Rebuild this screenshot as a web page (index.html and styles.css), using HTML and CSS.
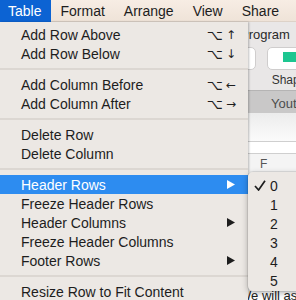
FILE: index.html
```html
<!DOCTYPE html>
<html lang="en">

<head>
  <meta charset="UTF-8" />
  <title>Table menu</title>
  <link rel="stylesheet" href="styles.css">
</head>

<body>
  <div class="menubar">
    <span class="bar-item active">Table</span>
    <span class="bar-item">Format</span>
    <span class="bar-item">Arrange</span>
    <span class="bar-item">View</span>
    <span class="bar-item">Share</span>
  </div>

  <!-- app window behind the menu -->
  <div class="window">
    <div class="title">Program</div>
    <div class="toolbar">
      <div class="tool">
        <div class="btn btn-a"></div>
      </div>
      <div class="tool">
        <div class="btn btn-b"><span class="shape"></span></div>
        <span class="tool-label">Shape</span>
      </div>
    </div>
    <div class="tabbar"><span class="tab">Youth</span></div>
    <div class="sheet">
      <div class="sheet-top"></div>
      <div class="sheet-gap"></div>
      <div class="col-head"><span class="col-f">F</span></div>
      <div class="sheet-body"></div>
      <p class="note">We will ask</p>
    </div>
  </div>

  <!-- Table menu -->
  <div class="menu">
    <div class="item">Add Row Above<span class="keys"><span class="opt">⌥</span><span class="dir">↑</span></span></div>
    <div class="item">Add Row Below<span class="keys"><span class="opt">⌥</span><span class="dir">↓</span></span></div>
    <div class="sep"></div>
    <div class="item">Add Column Before<span class="keys"><span class="opt">⌥</span><span class="dir">←</span></span></div>
    <div class="item">Add Column After<span class="keys"><span class="opt">⌥</span><span class="dir">→</span></span></div>
    <div class="sep"></div>
    <div class="item">Delete Row</div>
    <div class="item">Delete Column</div>
    <div class="sep"></div>
    <div class="item current">Header Rows<svg class="arrow" width="8" height="9" viewBox="0 0 8 9"><polygon points="0,0 8,4.5 0,9" /></svg></div>
    <div class="item">Freeze Header Rows</div>
    <div class="item">Header Columns<svg class="arrow" width="8" height="9" viewBox="0 0 8 9"><polygon points="0,0 8,4.5 0,9" /></svg></div>
    <div class="item">Freeze Header Columns</div>
    <div class="item">Footer Rows<svg class="arrow" width="8" height="9" viewBox="0 0 8 9"><polygon points="0,0 8,4.5 0,9" /></svg></div>
    <div class="sep"></div>
    <div class="item">Resize Row to Fit Content</div>
  </div>

  <!-- Header Rows submenu -->
  <div class="submenu">
    <div class="sub-item"><svg class="check" width="12" height="11" viewBox="0 0 12 11"><path d="M1 6 L4.6 10 L11 0.8" /></svg>0</div>
    <div class="sub-item">1</div>
    <div class="sub-item">2</div>
    <div class="sub-item">3</div>
    <div class="sub-item">4</div>
    <div class="sub-item">5</div>
  </div>
</body>

</html>
```

FILE: styles.css
```css
* {
  margin: 0;
  padding: 0;
  box-sizing: border-box;
}

body {
  width: 296px;
  height: 300px;
  overflow: hidden;
  position: relative;
  font-family: "Liberation Sans", Arial, sans-serif;
  color: #1d1d1d;
  background: #fff;
}

/* menu bar */
.menubar {
  height: 22px;
  display: flex;
  align-items: center;
  background: linear-gradient(#f7ede4, #efe3d8);
  border-bottom: 1px solid #ddd2c8;
  font-size: 14px;
}

.bar-item {
  height: 22px;
  line-height: 22px;
  padding: 0 9.5px;
  white-space: nowrap;
}

.bar-item:first-child {
  padding-left: 8px;
}

.bar-item.active {
  background-color: #0c63d3;
  color: #fff;
}

/* window behind */
.window {
  background: #fff;
}

.title {
  height: 24px;
  padding: 5px 0 0 240px;
  font-size: 13px;
  color: #2a2a2a;
  background: #e9e7e7;
  white-space: nowrap;
}

.toolbar {
  height: 44px;
  display: flex;
  gap: 11px;
  padding: 1px 0 0 216px;
  background: #e9e7e7;
}

.tool {
  display: flex;
  flex-direction: column;
  align-items: center;
  gap: 3px;
}

.btn {
  width: 40px;
  height: 23px;
  background: #fff;
  border: 1px solid #cfcdcd;
  border-radius: 5px;
  position: relative;
}

.btn-b {
  width: 44px;
}

.shape {
  position: absolute;
  left: 15px;
  top: 4px;
  width: 20px;
  height: 10px;
  background: #1dc690;
}

.tool-label {
  font-size: 12px;
  color: #333;
  white-space: nowrap;
}

.tabbar {
  height: 23px;
  padding: 5px 0 0 271px;
  background: #c9c8c8;
  border-top: 1px solid #b5b4b4;
  font-size: 13px;
  color: #4d4d4d;
  white-space: nowrap;
}

.sheet-top {
  height: 29px;
  background: linear-gradient(#ececec, #fbfbfb);
  border-bottom: 1px solid #cfcfcf;
}

.sheet-gap {
  height: 12px;
  border-bottom: 1px solid #cfcfcf;
}

.col-head {
  height: 18px;
  background: #f4f4f4;
  padding: 3px 0 0 260px;
  font-size: 12px;
  color: #555;
}

.sheet-body {
  height: 116px;
}

.note {
  padding-left: 239px;
  font-size: 13px;
  color: #222;
  white-space: nowrap;
}

/* dropdown menu */
.menu {
  position: absolute;
  top: 22px;
  left: 0;
  width: 248px;
  padding-top: 3px;
  background: #ece8e4;
  box-shadow: 1px 0 2px rgba(0, 0, 0, .25);
  font-size: 14px;
}

.item {
  height: 19px;
  display: flex;
  align-items: center;
  justify-content: space-between;
  padding: 0 12px 0 21px;
  white-space: nowrap;
}

.item.current {
  background-color: #2d8cf0;
  color: #fff;
}

.keys {
  display: flex;
  align-items: center;
  gap: 3px;
  font-family: "DejaVu Sans", sans-serif;
}

.opt {
  font-size: 14px;
}

.dir {
  font-size: 12px;
}

.arrow {
  fill: #1d1d1d;
  margin-right: 1px;
}

.current .arrow {
  fill: #fff;
}

.sep {
  height: 2px;
  margin: 5px 0;
  background: #dcd7d2;
}

/* submenu */
.submenu {
  position: absolute;
  top: 172px;
  left: 248px;
  width: 60px;
  padding: 4px 0 1px;
  background: #ece8e4;
  border-radius: 5px;
  box-shadow: 0 2px 6px rgba(0, 0, 0, .3), 0 0 0 1px rgba(0, 0, 0, .08);
  font-size: 14px;
}

.sub-item {
  height: 19px;
  display: flex;
  align-items: center;
  padding-left: 22px;
  position: relative;
}

.check {
  position: absolute;
  left: 6px;
  top: 4px;
  fill: none;
  stroke: #1d1d1d;
  stroke-width: 1.7;
}
```
